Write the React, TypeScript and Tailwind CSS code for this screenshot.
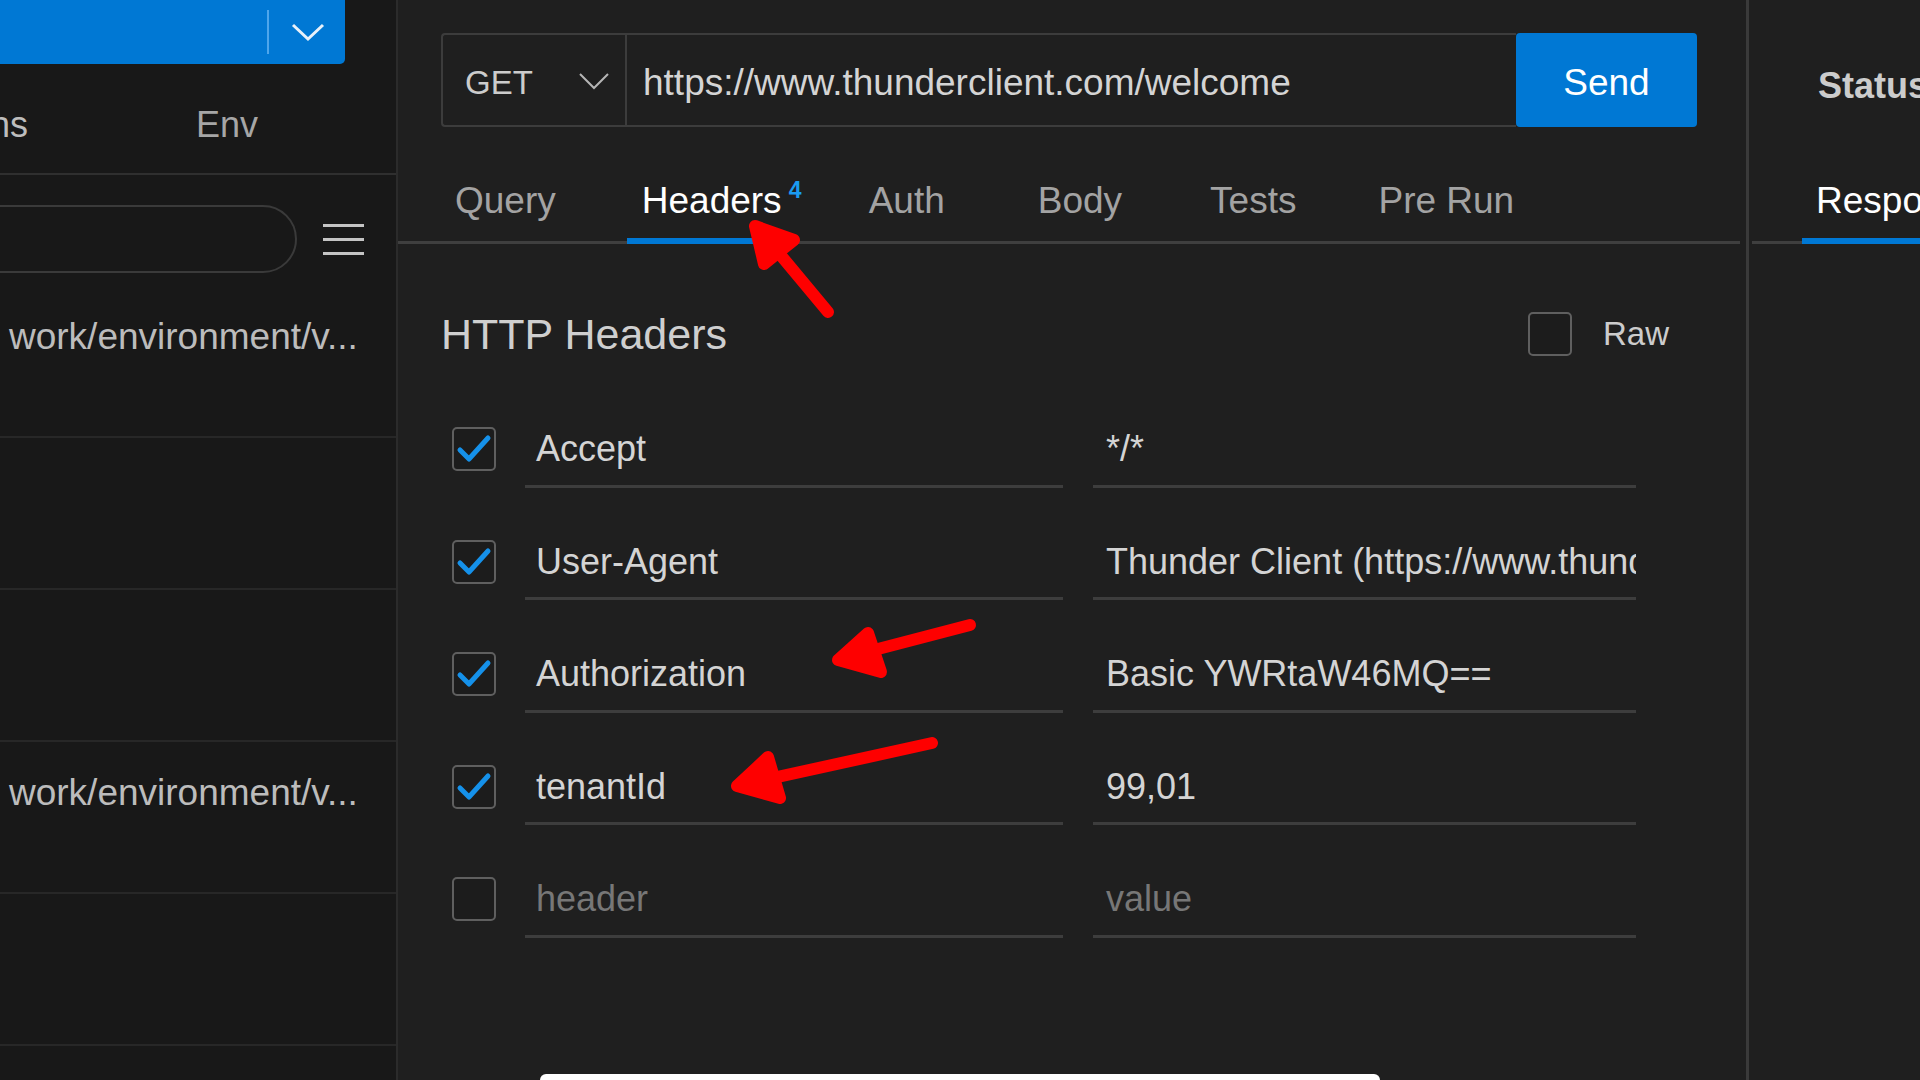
import React from 'react';

const rows = [
  { key: 'Accept', value: '*/*', checked: true },
  { key: 'User-Agent', value: 'Thunder Client (https://www.thunderclient.com)', checked: true },
  { key: 'Authorization', value: 'Basic YWRtaW46MQ==', checked: true },
  { key: 'tenantId', value: '99,01', checked: true },
  { key: '', value: '', checked: false },
];

const tabs = [
  { label: 'Query', gap: 'ml-0' },
  { label: 'Headers', gap: 'ml-[56px]' },
  { label: 'Auth', gap: 'ml-[57px]' },
  { label: 'Body', gap: 'ml-[63px]' },
  { label: 'Tests', gap: 'ml-[58px]' },
  { label: 'Pre Run', gap: 'ml-[52px]' },
];

const Checkbox: React.FC<{ checked: boolean }> = ({ checked }) => (
  <div className="w-[44px] h-[44px] shrink-0 rounded-[5px] border-2 border-[#5f5f5f] bg-[#1c1c1c] flex items-center justify-center">
    {checked && (
      <svg width="44" height="44" viewBox="0 0 44 44" className="-m-[2px]">
        <polyline points="8,23 17,32 36,11" fill="none" stroke="#1591ea" strokeWidth="5" strokeLinecap="round" strokeLinejoin="round" />
      </svg>
    )}
  </div>
);

const Sidebar: React.FC = () => (
  <div className="w-[398px] shrink-0 h-full bg-[#181818] border-r-2 border-[#2b2b2b] overflow-hidden flex flex-col">
    <div className="h-[64px] w-[345px] bg-[#0078d4] rounded-br-[5px] flex items-center">
      <div className="ml-[267px] w-[2px] h-[44px] bg-[#4ea6ec]" />
      <svg width="34" height="20" viewBox="0 0 34 20" className="ml-[22px]">
        <polyline points="2,3 17,17 32,3" fill="none" stroke="#e8f1fa" strokeWidth="3" />
      </svg>
    </div>
    <div className="h-[111px] pt-[12px] border-b-2 border-[#2f2f2f] flex items-center text-[36px]">
      <span className="-ml-[10px] text-[#bdbdbd]">ns</span>
      <span className="ml-[168px] text-[#a6a6a6]">Env</span>
    </div>
    <div className="mt-[30px] flex items-center">
      <div className="w-[340px] -ml-[43px] h-[68px] rounded-full border-2 border-[#3a3a3a]" />
      <div className="ml-[26px] flex flex-col gap-[11px]">
        <div className="w-[41px] h-[3px] bg-[#c4c4c4]" />
        <div className="w-[41px] h-[3px] bg-[#c4c4c4]" />
        <div className="w-[41px] h-[3px] bg-[#c4c4c4]" />
      </div>
    </div>
    <div className="mt-[13px] flex flex-col">
      {['work/environment/v...', '', '', 'work/environment/v...', ''].map((t, i) => (
        <div key={i} className="h-[152px] shrink-0 border-b-2 border-[#272727] pt-[30px] pl-[9px]">
          <div className="text-[37px] leading-[42px] text-[#bcbcbc] whitespace-nowrap">{t}</div>
        </div>
      ))}
    </div>
  </div>
);

const MainPanel: React.FC = () => (
  <div className="w-[1348px] shrink-0 h-full flex flex-col">
    <div className="mt-[33px] ml-[43px] w-[1256px] h-[94px] flex">
      <div className="flex-1 flex border-2 border-[#3c3c3c] border-r-0 rounded-l-[4px]">
        <div className="w-[184px] shrink-0 border-r-2 border-[#3c3c3c] flex items-center pl-[22px] pt-[6px]">
          <span className="text-[33px] text-[#cccccc]">GET</span>
          <svg width="30" height="17" viewBox="0 0 30 17" className="ml-[46px] -mt-[4px]">
            <polyline points="1,1 15,15 29,1" fill="none" stroke="#b5b5b5" strokeWidth="2" />
          </svg>
        </div>
        <div className="flex-1 flex items-center pl-[16px] pt-[5px] text-[37px] text-[#d4d4d4] whitespace-nowrap overflow-hidden">
          https://www.thunderclient.com/welcome
        </div>
      </div>
      <div className="w-[181px] shrink-0 bg-[#0078d4] rounded-[4px] flex items-center justify-center pt-[5px] text-[37px] text-white">
        Send
      </div>
    </div>

    <div className="mt-[32px] w-[1342px] border-b-[3px] border-[#3f3f3f] flex pl-[42px]">
      {tabs.map((t) => (
        <div key={t.label} className={`relative h-[82px] px-[15px] flex items-center ${t.gap}`}>
          <span className={`relative text-[37px] leading-none ${t.label === 'Headers' ? 'text-white' : 'text-[#a3a3a3]'}`}>
            {t.label}
            {t.label === 'Headers' && (
              <span className="absolute left-full ml-[7px] -top-[3px] text-[23px] leading-none font-bold text-[#1a9bf0]">4</span>
            )}
          </span>
          {t.label === 'Headers' && <div className="absolute left-0 right-0 -bottom-[3px] h-[6px] bg-[#0078d4]" />}
        </div>
      ))}
    </div>

    <div className="mt-[56px] ml-[43px] w-[1228px] h-[68px] flex items-center justify-between">
      <span className="text-[43px] text-[#cfcfcf]">HTTP Headers</span>
      <div className="flex items-center">
        <Checkbox checked={false} />
        <span className="ml-[31px] text-[33px] text-[#cccccc]">Raw</span>
      </div>
    </div>

    <div className="mt-[25px] ml-[43px] flex flex-col">
      {rows.map((r, i) => (
        <div key={i} className="h-[112.5px] flex items-center">
          <div className="ml-[11px]">
            <Checkbox checked={r.checked} />
          </div>
          <div className="ml-[29px] w-[538px] h-[77px] pt-[3px] border-b-[3px] border-[#3d3d3d] pl-[11px] flex items-center text-[36px] whitespace-nowrap overflow-hidden">
            {r.key ? <span className="text-[#d4d4d4]">{r.key}</span> : <span className="text-[#777777]">header</span>}
          </div>
          <div className="ml-[30px] w-[543px] h-[77px] pt-[3px] border-b-[3px] border-[#3d3d3d] pl-[13px] flex items-center text-[36px] whitespace-nowrap overflow-hidden">
            {r.value ? <span className="text-[#d4d4d4]">{r.value}</span> : <span className="text-[#777777]">value</span>}
          </div>
        </div>
      ))}
    </div>
  </div>
);

const ResponsePanel: React.FC = () => (
  <div className="flex-1 h-full border-l-[3px] border-[#3a3a3a] flex flex-col overflow-hidden">
    <div className="mt-[33px] h-[94px] flex items-center pl-[69px] pt-[11px] text-[36px] font-bold text-[#cccccc] whitespace-nowrap">
      Status: 200 OK
    </div>
    <div className="mt-[32px] ml-[3px] border-b-[3px] border-[#3f3f3f] flex pl-[50px]">
      <div className="relative h-[82px] px-[14px] flex items-center">
        <span className="text-[37px] leading-none text-white whitespace-nowrap">Response</span>
        <div className="absolute left-0 right-0 -bottom-[3px] h-[6px] bg-[#0078d4]" />
      </div>
    </div>
  </div>
);

const Arrows: React.FC = () => (
  <svg className="absolute inset-0 pointer-events-none" width="1920" height="1080" viewBox="0 0 1920 1080">
    <g fill="#fe0000" stroke="#fe0000" strokeWidth="12" strokeLinecap="round" strokeLinejoin="round">
      <line x1="828" y1="312" x2="768" y2="240" />
      <polygon points="755,226 764,264 794,240" />
      <line x1="970" y1="625" x2="855" y2="655" />
      <polygon points="838,660 868,633 881,672" />
      <line x1="932" y1="743" x2="755" y2="782" />
      <polygon points="737,786 768,757 780,798" />
    </g>
  </svg>
);

export default function App() {
  return (
    <div className="relative w-[1920px] h-[1080px] overflow-hidden flex bg-[#1f1f1f] font-['Liberation_Sans',Arial,sans-serif]">
      <Sidebar />
      <MainPanel />
      <ResponsePanel />
      <div className="absolute left-[540px] bottom-0 w-[840px] h-[6px] bg-white rounded-t-[6px]" />
      <Arrows />
    </div>
  );
}
